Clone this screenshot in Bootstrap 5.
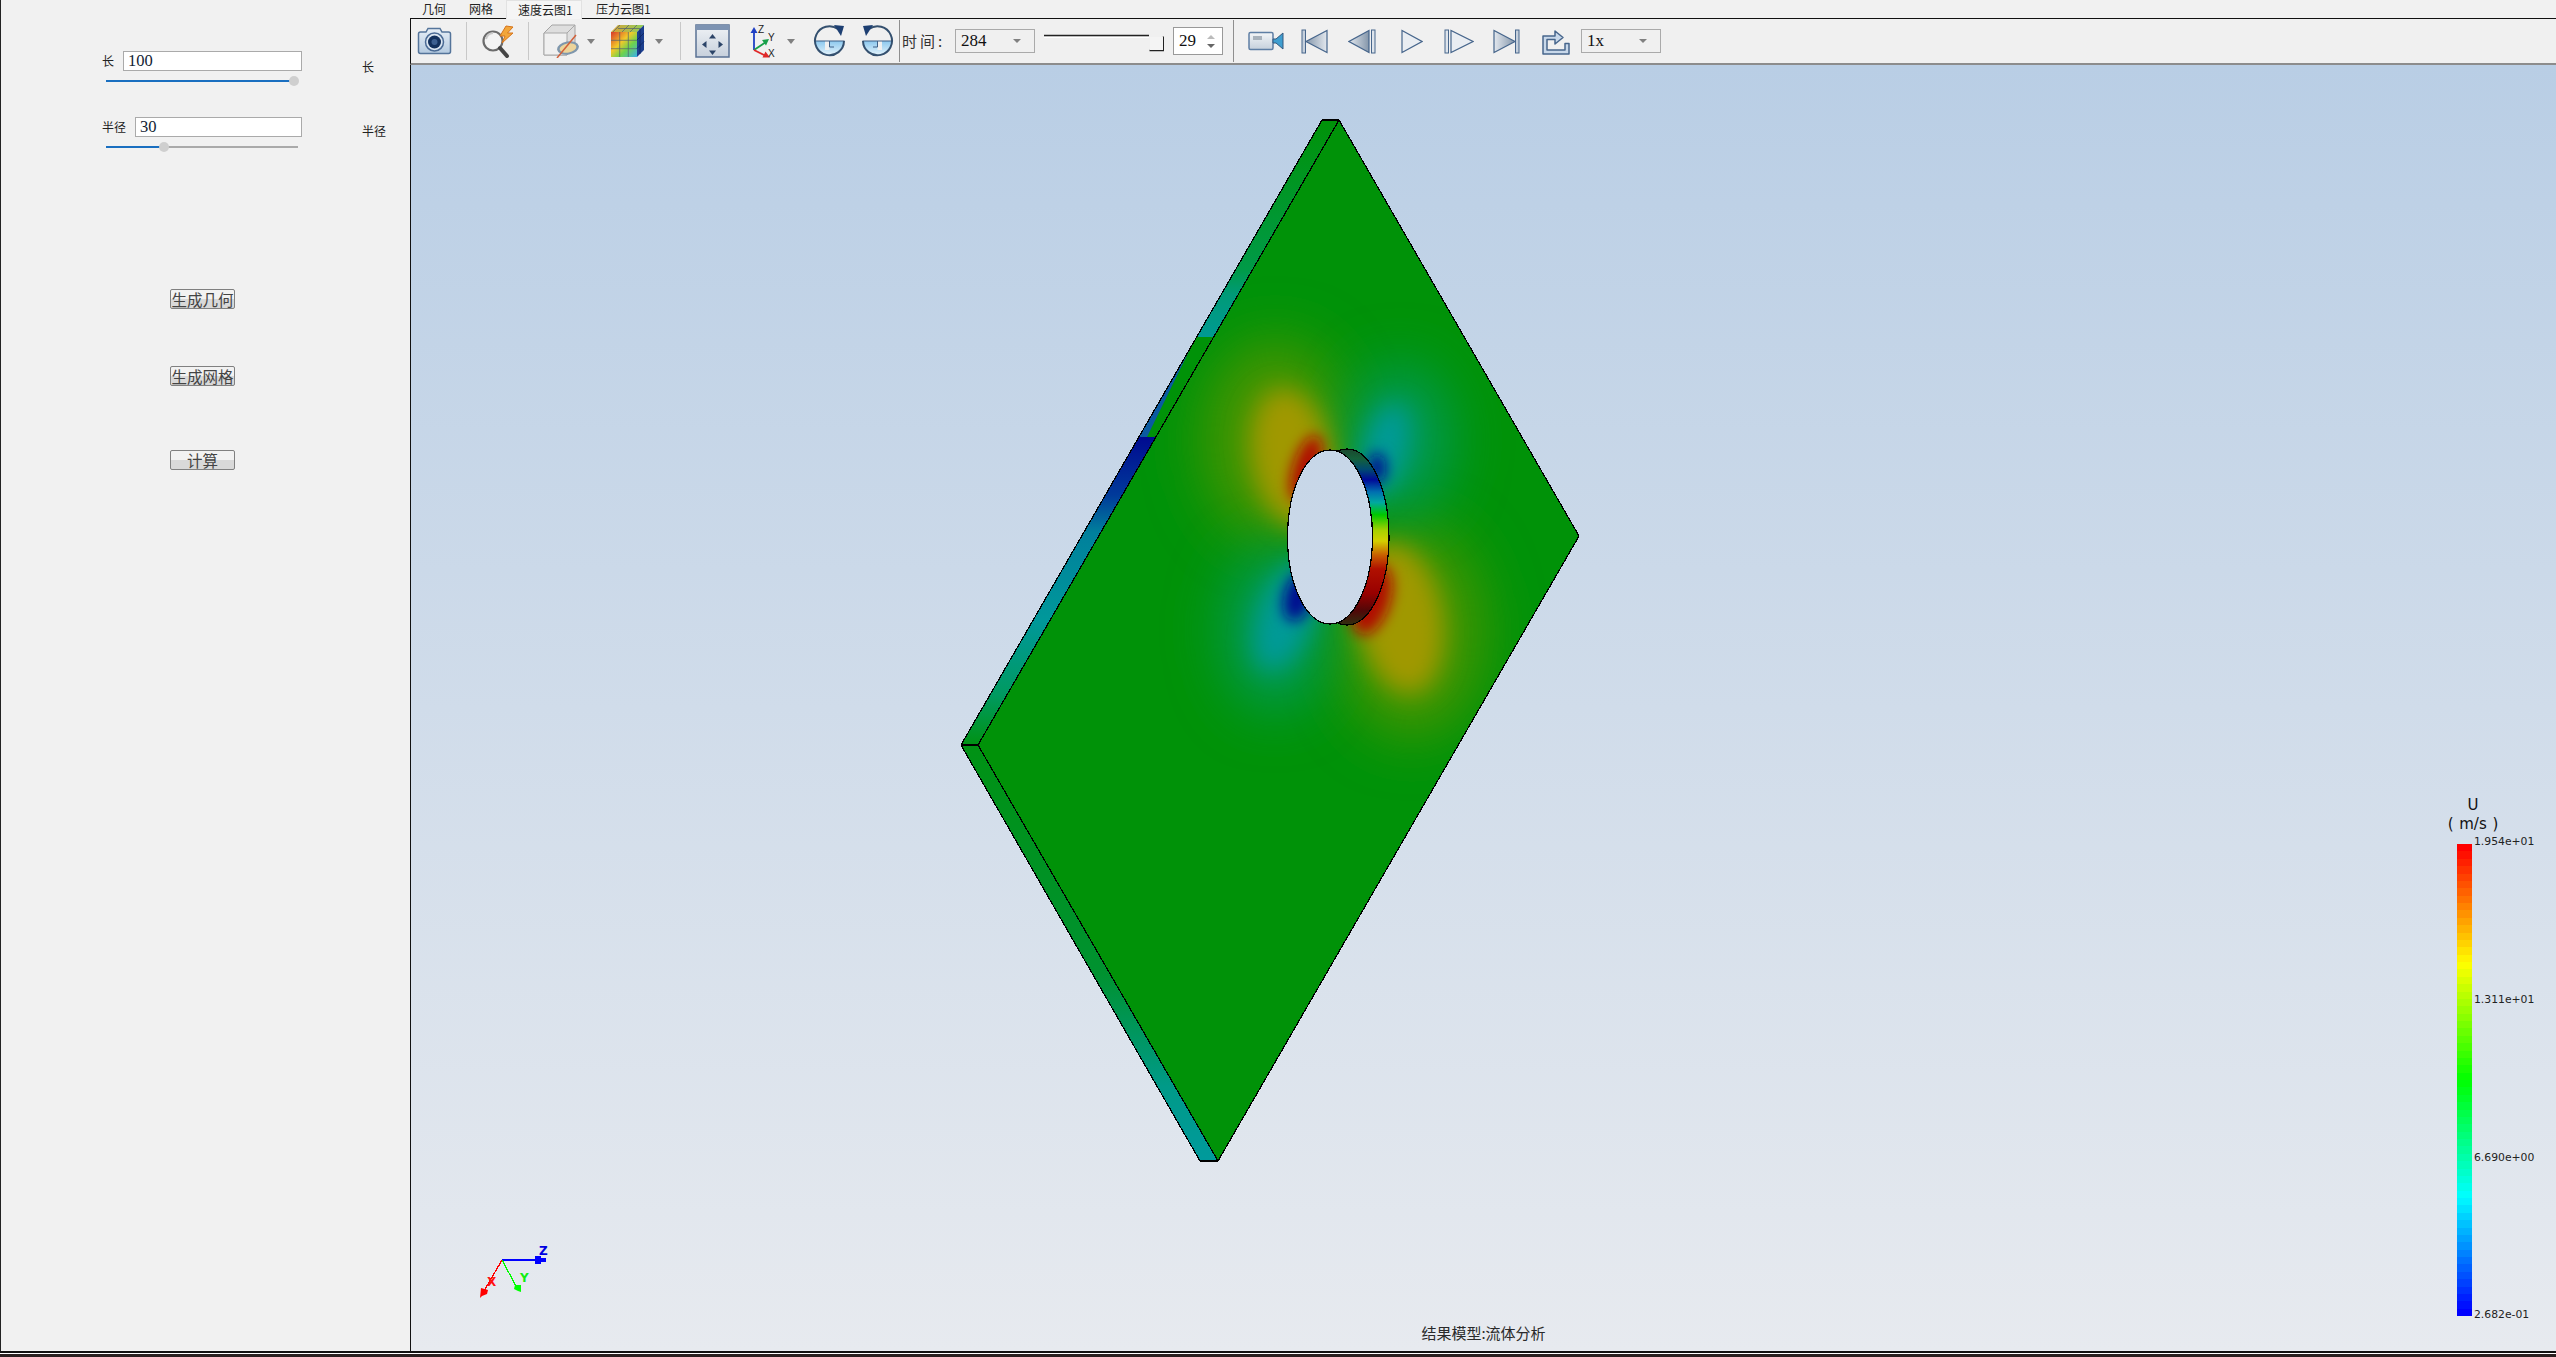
<!DOCTYPE html>
<html lang="zh">
<head>
<meta charset="UTF-8">
<title>流体分析</title>
<link href="https://cdn.jsdelivr.net/npm/bootstrap@5.3.0/dist/css/bootstrap.min.css" rel="stylesheet">
<style>
body { background: #f1f1f1; height: 1357px; overflow: hidden; color: #111; font-family: "Liberation Serif", "Noto Sans CJK SC", serif; font-size: 12px; }
.app-shell { height: 1351px; border-left: 1px solid #222; }
.side-panel { width: 409px; flex: none; }
.cjk { font-family: "Noto Sans CJK SC", sans-serif; }
.param-row { height: 20px; }
.param-row.first { margin-top: 51px; padding-left: 101px; }
.param-row.second { margin-top: 35px; padding-left: 101px; }
.param-label { font-size: 12px; line-height: 20px; color: #222; }
.param-label.short { width: 21px; }
.param-label.long { width: 33px; }
.param-input.form-control { width: 179px; height: 20px; padding: 0 4px; border: 1px solid #aaa; border-radius: 0; font-size: 16.5px; line-height: 18px; font-family: "Liberation Serif", serif; color: #123; }
.param-input.narrow.form-control { width: 167px; }
.side-note { position: absolute; left: 361px; font-size: 12px; line-height: 16px; color: #222; }
.side-note.n1 { top: 59px; }
.side-note.n2 { top: 123px; }
.track { position: relative; width: 192px; height: 2px; margin: 9px 0 0 105px; background: #aaa; }
.track-fill { height: 2px; background: #1a6fc0; }
.track-thumb { position: absolute; top: -4px; width: 10px; height: 10px; margin-left: -5px; border-radius: 50%; background: #cfcfcf; }
.qt-btn.btn { display: block; width: 65px; height: 20px; padding: 0; white-space: nowrap; border: 1px solid #808080; border-radius: 2px; background: linear-gradient(#f2f2f2 0 50%, #d9d9d9 50%); font-size: 15.5px; line-height: 17px; color: #444; margin-left: 169px; text-align: center; }
.b1.btn { margin-top: 141px; }
.b2.btn { margin-top: 57px; }
.b3.btn { margin-top: 64px; }
.main-pane { min-width: 0; }
.tab-strip { height: 18px; padding-left: 12px; font-size: 12px; line-height: 18px; color: #222; white-space: nowrap; }
.tab-item { width: 47px; }
.tab-item.w2 { width: 37px; }
.tab-item.on { width: 76px; height: 19px; margin: 0 14px 0 0; padding-left: 11px; background: #f5f5f5; border: 1px solid #e2e2e2; border-bottom: 0; position: relative; z-index: 2; }
.tab-item.w3 { width: 60px; }
.tool-strip { height: 47px; border-top: 1px solid #111; border-left: 1px solid #111; border-bottom: 2px solid #8c8c8c; background: #f0f0f0; padding-left: 0; }
.tool-strip > * { flex: none; }
.tool-sep { width: 1px; height: 38px; background: #c8c8c8; }
.tool-sep.dark { background: #8f8f8f; height: 42px; }
.drop-tri { width: 0; height: 0; border: 4.5px solid transparent; border-top: 5px solid #808080; border-bottom: 0; }
.time-label { font-size: 15px; letter-spacing: 3px; color: #333; width: 43px; white-space: nowrap; }
.combo-box { height: 24px; border: 1px solid #aaa; width: 80px; padding-left: 5px; font-size: 17px; line-height: 22px; color: #111; position: relative; }
.combo-box::after { content: ""; position: absolute; right: 13px; top: 9px; border: 4px solid transparent; border-top: 4px solid #808080; border-bottom: 0; }
.spin-box { width: 50px; height: 28px; background: #fff; border: 1px solid #999; padding-left: 5px; font-size: 17px; line-height: 26px; position: relative; }
.spin-box::before { content: ""; position: absolute; right: 7px; top: 7px; border: 4px solid transparent; border-bottom: 4px solid #bbb; border-top: 0; }
.spin-box::after { content: ""; position: absolute; right: 7px; top: 16px; border: 4px solid transparent; border-top: 4px solid #666; border-bottom: 0; }
.sp2 { margin-left: 2px; } .sp5 { margin-left: 5px; } .sp6 { margin-left: 6px; } .sp8 { margin-left: 8px; } .sp9 { margin-left: 9px; } .sp10 { margin-left: 10px; } .sp11 { margin-left: 11px; }
.sp12 { margin-left: 12px; } .sp13 { margin-left: 13px; } .sp14 { margin-left: 14px; } .sp15 { margin-left: 15px; } .sp16 { margin-left: 16px; } .sp17 { margin-left: 17px; }
.sp18 { margin-left: 18px; } .sp19 { margin-left: 19px; } .sp20 { margin-left: 20px; } .sp21 { margin-left: 21px; } .sp25 { margin-left: 25px; }
.view-port { position: relative; height: 1286px; border-left: 1px solid #111; background: linear-gradient(#b9cee5, #e7eaef); overflow: hidden; }
.scene { position: absolute; left: 0; top: 0; }
.legend-title { position: absolute; left: 2030px; width: 64px; text-align: center; font-family: "DejaVu Sans", sans-serif; color: #111; line-height: 18px; }
.legend-title.u { top: 731px; font-size: 15px; }
.legend-title.unit { top: 750px; font-size: 15px; word-spacing: 1px; }
.legend-bar { position: absolute; left: 2046px; top: 779px; width: 15px; height: 472px; display: flex; flex-direction: column; }
.legend-bar div { flex: 1; }
.legend-val { position: absolute; left: 2063px; font-family: "DejaVu Sans", sans-serif; font-size: 10.8px; line-height: 14px; color: #222; white-space: nowrap; }
.lv1 { top: 770px; } .lv2 { top: 928px; } .lv3 { top: 1086px; } .lv4 { top: 1243px; }
.model-note { position: absolute; left: 0; right: 0; bottom: 8px; text-align: center; font-size: 15px; line-height: 20px; color: #2a2a2a; font-family: "Noto Sans CJK SC", sans-serif; }
.foot-line { height: 6px; border-top: 2px solid #111; background: linear-gradient(#fff 0 1px, #2a2020 1px); }
</style>
</head>
<body>
<div class="app-shell d-flex">
  <aside class="side-panel position-relative">
    <div class="param-row first d-flex"><span class="param-label short cjk">长</span><input class="param-input form-control" value="100"></div>
    <div class="track"><div class="track-fill" style="width:98%"></div><div class="track-thumb" style="left:98%"></div></div>
    <div class="param-row second d-flex"><span class="param-label long cjk">半径</span><input class="param-input narrow form-control" value="30"></div>
    <div class="track"><div class="track-fill" style="width:30%"></div><div class="track-thumb" style="left:30%"></div></div>
    <span class="side-note n1 cjk">长</span>
    <span class="side-note n2 cjk">半径</span>
    <button class="qt-btn b1 btn cjk">生成几何</button>
    <button class="qt-btn b2 btn cjk">生成网格</button>
    <button class="qt-btn b3 btn cjk">计算</button>
  </aside>
  <main class="main-pane flex-grow-1">
    <div class="tab-strip d-flex cjk">
      <span class="tab-item">几何</span>
      <span class="tab-item w2">网格</span>
      <span class="tab-item on">速度云图1</span>
      <span class="tab-item w3">压力云图1</span>
    </div>
    <div class="tool-strip d-flex align-items-center">
      <!-- snapshot -->
      <svg class="sp6" width="35" height="28" viewBox="0 0 35 28"><defs><linearGradient id="gCam" x1="0" y1="0" x2="0" y2="1"><stop offset="0" stop-color="#e6eef6"/><stop offset="1" stop-color="#b4cae0"/></linearGradient></defs><path d="M1.5 7 Q1.5 5 3.5 5 H9 L11 1.5 H23 L25 5 H31.5 Q33.5 5 33.5 7 V24.500 Q33.500 26.500 31.500 26.500 H3.500 Q1.500 26.500 1.500 24.500 Z" fill="url(#gCam)" stroke="#54749a" stroke-width="1.500"/><circle cx="17.500" cy="15" r="9" fill="#dbe6f1" stroke="#4a6a94" stroke-width="1.500"/><circle cx="17.500" cy="15" r="6.500" fill="#12305c"/><circle cx="17.500" cy="15" r="3" fill="#3c5f90"/></svg>
      <span class="tool-sep sp14"></span>
      <!-- zoom -->
      <svg class="sp12" width="36" height="33" viewBox="0 0 36 33"><circle cx="14" cy="16" r="9.500" fill="#f4f4f4" stroke="#6c6c6c" stroke-width="2.200"/><path d="M14 8 A8 8 0 0 0 7 14" fill="none" stroke="#c9c9c9" stroke-width="2"/><path d="M21 23 L28 31" stroke="#454545" stroke-width="4" stroke-linecap="round"/><path d="M27 1 L21 11 H26 L23 18 L34 8 H28.500 L34 2 Z" fill="#f2a63a" stroke="#d5741c" stroke-width="1"/></svg>
      <span class="tool-sep sp13"></span>
      <!-- section box -->
      <svg class="sp14" width="36" height="34" viewBox="0 0 36 34"><path d="M1 9 L9 1 H32 V22 L24 31 H1 Z" fill="#dedede" stroke="#a4a4a4"/><path d="M1 9 H24 V31 H1 Z" fill="#f0f0f0" stroke="#a8a8a8"/><path d="M24 9 L32 1" fill="none" stroke="#a8a8a8"/><ellipse cx="25" cy="24" rx="11" ry="6.500" fill="#7f97ad" transform="rotate(-10 25 24)"/><ellipse cx="25" cy="24" rx="8.500" ry="4.500" fill="#ecd49a" transform="rotate(-10 25 24)"/><path d="M14 34 L33 11" stroke="#d2603a" stroke-width="1.500"/></svg>
      <span class="drop-tri sp8"></span>
      <!-- color cube -->
      <svg class="sp16" width="34" height="34" viewBox="0 0 34 34"><defs><linearGradient id="gCube" x1="0" y1="0" x2="1" y2="1"><stop offset="0" stop-color="#d8382a"/><stop offset=".4" stop-color="#f2c92a"/><stop offset=".65" stop-color="#6ed24c"/><stop offset="1" stop-color="#38b0ea"/></linearGradient><linearGradient id="gTop" x1="0" y1="0" x2="1" y2="0"><stop offset="0" stop-color="#d8a238"/><stop offset="1" stop-color="#8fd05a"/></linearGradient></defs><path d="M0 8 L7 1 H33 L26 8 Z" fill="url(#gTop)"/><path d="M26 8 L33 1 V26 L26 33 Z" fill="#1c3f8e"/><rect x="0" y="8" width="26" height="25" fill="url(#gCube)"/><path d="M8.700 8 V33 M17.300 8 V33 M0 16.300 H26 M0 24.700 H26 M7 4.500 H30 M9 1 L2 8 M18 1 L11 8 M26 1 L19 8" stroke="#50606e" stroke-width=".7" fill="none"/><path d="M29 5 V30 M26 16 L33 9 M26 24.500 L33 17.500" stroke="#0e2560" stroke-width=".8" fill="none"/></svg>
      <span class="drop-tri sp10"></span>
      <span class="tool-sep sp17"></span>
      <!-- fit view -->
      <svg class="sp14" width="35" height="34" viewBox="0 0 35 34"><defs><linearGradient id="gFit" x1="0" y1="0" x2="0" y2="1"><stop offset="0" stop-color="#f0f3f6"/><stop offset="1" stop-color="#c7d0dc"/></linearGradient></defs><rect x="1" y="1" width="33" height="32" fill="url(#gFit)" stroke="#5a7194" stroke-width="1.500"/><rect x="1" y="1" width="33" height="5" fill="#7d93b2"/><g fill="#2c4468"><path d="M17.500 10 L14 14.500 H21 Z"/><path d="M17.500 31 L14 26.500 H21 Z"/><path d="M7 20.500 L11.500 17 V24 Z"/><path d="M28 20.500 L23.500 17 V24 Z"/></g></svg>
      <!-- axis -->
      <svg class="sp18" width="29" height="34" viewBox="0 0 29 34"><path d="M6 26 V8" stroke="#1f3fc4" stroke-width="1.800"/><path d="M6 3 L2.500 9 H9.500 Z" fill="#1f3fc4"/><path d="M6 26 L18 18" stroke="#18a04a" stroke-width="1.800"/><path d="M21 15 L14 16 L18 21.500 Z" fill="#18a04a"/><path d="M6 26 L18 32" stroke="#e02828" stroke-width="1.800"/><path d="M22 33.500 L14.500 33.500 L17.500 27.500 Z" fill="#e02828"/><text x="10" y="9" font-family="Liberation Sans, sans-serif" font-size="10" fill="#222">Z</text><text x="20" y="17" font-family="Liberation Sans, sans-serif" font-size="10" fill="#222">Y</text><text x="20" y="33" font-family="Liberation Sans, sans-serif" font-size="10" fill="#222">X</text></svg>
      <span class="drop-tri sp10"></span>
      <!-- rotate cw -->
      <svg class="sp18" width="33" height="32" viewBox="0 0 33 32"><defs><linearGradient id="gPie" x1="0" y1="0" x2="0" y2="1"><stop offset="0" stop-color="#8cc8ee"/><stop offset="1" stop-color="#e6f4fc"/></linearGradient></defs><path d="M2 16 A14.500 14.500 0 0 0 31 16 H16.500 V25 H12 V16 Z" fill="url(#gPie)"/><path d="M1.500 16 H31.500 M16.500 16 V22 H21" fill="none" stroke="#3f5f86" stroke-width="1"/><path d="M25 4 A14.500 14.500 0 1 0 31 16" fill="none" stroke="#34506f" stroke-width="2"/><path d="M21 0 L31 1 L28 11 Z" fill="#1d3f72"/></svg>
      <!-- rotate ccw -->
      <svg class="sp15" width="33" height="32" viewBox="0 0 33 32"><path d="M31 16 A14.500 14.500 0 0 1 2 16 H16.500 V25 H21 V16 Z" fill="url(#gPie)"/><path d="M1.500 16 H31.500 M16.500 16 V22 H12" fill="none" stroke="#3f5f86" stroke-width="1"/><path d="M8 4 A14.500 14.500 0 1 1 2 16" fill="none" stroke="#34506f" stroke-width="2"/><path d="M12 0 L2 1 L5 11 Z" fill="#1d3f72"/></svg>
      <span class="tool-sep dark sp5"></span>
      <span class="time-label sp2 cjk">时间:</span>
      <div class="combo-box sp10">284</div>
      <!-- time slider -->
      <svg class="sp9" width="120" height="26" viewBox="0 -5 120 26"><path d="M0 2.500 H105" stroke="#222" stroke-width="1.500"/><path d="M0 4.500 H105" stroke="#fff"/><path d="M105.500 17.500 H119.500 V3.500" fill="none" stroke="#222" stroke-width="1.500"/><rect x="106" y="4" width="13" height="13" fill="#f4f4f4"/></svg>
      <div class="spin-box sp9">29</div>
      <span class="tool-sep dark sp10"></span>
      <!-- record -->
      <svg class="sp14" width="36" height="20" viewBox="0 0 36 20"><defs><linearGradient id="gRec" x1="0" y1="0" x2="0" y2="1"><stop offset="0" stop-color="#f4f6f8"/><stop offset="1" stop-color="#c5d0dc"/></linearGradient></defs><rect x="1" y="1.500" width="24" height="17" rx="1.500" fill="url(#gRec)" stroke="#5e7ea4" stroke-width="1.500"/><rect x="5" y="5" width="9" height="4" fill="#a8b2bc"/><path d="M25 8 L28 8 L35 2 V18 L28 12 H25 Z" fill="#3f9ed0" stroke="#35597f"/></svg>
      <!-- playback -->
      <svg class="sp17" width="27" height="25" viewBox="0 0 27 25"><defs><linearGradient id="gTri" x1="0" y1="0" x2="1" y2="0"><stop offset="0" stop-color="#8496aa"/><stop offset="1" stop-color="#e3e8ee"/></linearGradient><linearGradient id="gTriR" x1="0" y1="0" x2="1" y2="0"><stop offset="0" stop-color="#e3e8ee"/><stop offset="1" stop-color="#8496aa"/></linearGradient></defs><rect x="1" y="1" width="3.500" height="23" fill="#c6d0dc" stroke="#47668c"/><path d="M26 1.500 V23.500 L5 12.500 Z" fill="url(#gTri)" stroke="#47668c" stroke-width="1.200"/></svg>
      <svg class="sp20" width="28" height="25" viewBox="0 0 28 25"><path d="M21 1.500 V23.500 L1 12.500 Z" fill="url(#gTriR)" stroke="#47668c" stroke-width="1.200"/><rect x="23.500" y="1" width="3.500" height="23" fill="#dfe5ec" stroke="#47668c"/></svg>
      <svg class="sp25" width="22" height="25" viewBox="0 0 22 25"><path d="M1 1.500 V23.500 L21 12.500 Z" fill="#e9edf2" stroke="#47668c" stroke-width="1.200"/></svg>
      <svg class="sp21" width="30" height="25" viewBox="0 0 30 25"><rect x="1" y="1" width="3.500" height="23" fill="#dfe5ec" stroke="#47668c"/><path d="M7 1.500 V23.500 L29 12.500 Z" fill="#e9edf2" stroke="#47668c" stroke-width="1.200"/></svg>
      <svg class="sp19" width="27" height="25" viewBox="0 0 27 25"><path d="M1 1.500 V23.500 L22 12.500 Z" fill="url(#gTriR)" stroke="#47668c" stroke-width="1.200"/><rect x="22.500" y="1" width="3.500" height="23" fill="#c6d0dc" stroke="#47668c"/></svg>
      <!-- export -->
      <svg class="sp21" width="29" height="27" viewBox="0 0 29 27"><path d="M2 8 H14 V3 L22 9.500 L14 16 V11.500 H6 V22 H24 V15.500 H28 V26 H2 Z" fill="#c8d8ea" stroke="#47668c" stroke-width="1.500" stroke-linejoin="round"/></svg>
      <div class="combo-box sp11">1x</div>
    </div>
    <div class="view-port">
      <svg class="scene" width="2145" height="1286" viewBox="411 65 2145 1286">
        <defs>
          <linearGradient id="skyFill" gradientUnits="userSpaceOnUse" x1="0" y1="65" x2="0" y2="1351"><stop offset="0" stop-color="#b9cee5"/><stop offset="1" stop-color="#e7eaef"/></linearGradient>
          <linearGradient id="edgeTop" gradientUnits="userSpaceOnUse" x1="0" y1="120" x2="0" y2="745">
            <stop offset="0" stop-color="#009208"/><stop offset=".24" stop-color="#009a48"/><stop offset=".28" stop-color="#009a78"/><stop offset=".347" stop-color="#009a92"/>
            <stop offset=".347" stop-color="#009208"/><stop offset=".507" stop-color="#009208"/><stop offset=".507" stop-color="#000a90"/>
            <stop offset=".6" stop-color="#003a9a"/><stop offset=".66" stop-color="#00809c"/><stop offset=".8" stop-color="#00989a"/><stop offset=".92" stop-color="#009a60"/><stop offset="1" stop-color="#009214"/>
          </linearGradient>
          <linearGradient id="edgeLow" gradientUnits="userSpaceOnUse" x1="0" y1="745" x2="0" y2="1161">
            <stop offset="0" stop-color="#009214"/><stop offset=".55" stop-color="#009230"/><stop offset=".82" stop-color="#009a88"/><stop offset="1" stop-color="#009a9c"/>
          </linearGradient>
          <linearGradient id="wallFill" gradientUnits="userSpaceOnUse" x1="0" y1="450" x2="0" y2="625">
            <stop offset="0" stop-color="#1a4a30"/><stop offset=".05" stop-color="#14603a"/><stop offset=".11" stop-color="#004a70"/><stop offset=".17" stop-color="#000a98"/><stop offset=".24" stop-color="#0070b0"/><stop offset=".3" stop-color="#00a8a0"/><stop offset=".37" stop-color="#00c800"/><stop offset=".46" stop-color="#a8d000"/><stop offset=".52" stop-color="#d4d000"/><stop offset=".6" stop-color="#c86000"/><stop offset=".68" stop-color="#b01000"/><stop offset=".82" stop-color="#980000"/><stop offset=".92" stop-color="#500808"/><stop offset="1" stop-color="#303010"/>
          </linearGradient>
          <clipPath id="faceClip"><polygon points="1339,120 1579,536 1218,1161 978,745"/></clipPath>
          <filter id="blurWide" x="-100%" y="-100%" width="300%" height="300%"><feGaussianBlur stdDeviation="28"/></filter>
          <filter id="blurMid" x="-100%" y="-100%" width="300%" height="300%"><feGaussianBlur stdDeviation="12"/></filter>
          <filter id="blurTight" x="-100%" y="-100%" width="300%" height="300%"><feGaussianBlur stdDeviation="7"/></filter>
        </defs>
        <!-- plate edges -->
        <polygon points="1322,120 1339,120 978,745 961,745" fill="url(#edgeTop)"/>
        <polygon points="1193,343 1139,437 1147,437" fill="#0a5aa0"/>
        <polygon points="961,745 978,745 1218,1161 1200,1161" fill="url(#edgeLow)"/>
        <!-- plate face -->
        <polygon points="1339,120 1579,536 1218,1161 978,745" fill="#009208"/>
        <g clip-path="url(#faceClip)">
          <ellipse cx="1275" cy="440" rx="72" ry="100" fill="#4a9400" filter="url(#blurWide)"/>
          <ellipse cx="1412" cy="632" rx="72" ry="105" fill="#4a9400" filter="url(#blurWide)"/>
          <ellipse cx="1400" cy="440" rx="50" ry="75" fill="#009a58" filter="url(#blurWide)"/>
          <ellipse cx="1275" cy="630" rx="50" ry="80" fill="#009a58" filter="url(#blurWide)"/>
          <ellipse cx="1292" cy="458" rx="40" ry="70" fill="#a09800" filter="url(#blurMid)" transform="rotate(-10 1292 458)"/>
          <ellipse cx="1400" cy="618" rx="42" ry="76" fill="#a09800" filter="url(#blurMid)" transform="rotate(-10 1400 618)"/>
          <ellipse cx="1385" cy="450" rx="22" ry="48" fill="#009a98" filter="url(#blurMid)" transform="rotate(15 1385 450)"/>
          <ellipse cx="1286" cy="615" rx="27" ry="58" fill="#009a98" filter="url(#blurMid)" transform="rotate(20 1286 615)"/>
          <ellipse cx="1306" cy="468" rx="13" ry="34" fill="#b01000" filter="url(#blurTight)" transform="rotate(18 1306 468)"/>
          <ellipse cx="1372" cy="600" rx="18" ry="36" fill="#b01000" filter="url(#blurTight)" transform="rotate(18 1372 600)"/>
          <ellipse cx="1377" cy="468" rx="9" ry="15" fill="#000a90" filter="url(#blurTight)"/>
          <ellipse cx="1298" cy="597" rx="14" ry="25" fill="#000a90" filter="url(#blurTight)" transform="rotate(15 1298 597)"/>
        </g>
        <!-- outlines -->
        <g fill="none" stroke="#000" stroke-width="1.200" shape-rendering="crispEdges">
          <polygon points="1322,120 1339,120 1579,536 1218,1161 1200,1161 961,745"/>
          <path d="M1339 120 L978 745 L1218 1161 M961 745 H978"/>
        </g>
        <!-- hole -->
        <ellipse cx="1347" cy="537" rx="42" ry="88" fill="url(#wallFill)" stroke="#000" stroke-width="1.200" shape-rendering="crispEdges"/>
        <ellipse cx="1330" cy="537" rx="42.500" ry="87" fill="url(#skyFill)" stroke="#000" stroke-width="1.200" shape-rendering="crispEdges"/>
        <!-- triad -->
        <g fill="none" stroke-width="1.300" shape-rendering="crispEdges">
          <path d="M502 1260 H536" stroke="#0000ff"/><path d="M502 1260 L484 1291" stroke="#ff0000"/><path d="M502 1260 L516 1286" stroke="#00ff00"/>
        </g>
        <path d="M535 1256 H541 V1258 H546 V1262 H541 V1264 H535 Z" fill="#0000ff"/>
        <path d="M481 1288 L488 1290 L487 1294 L482 1296 L480 1298 Z" fill="#ff0000"/>
        <path d="M515 1285 L521 1285 L521 1292 L518 1291 L514 1289 Z" fill="#00ff00"/>
        <g font-family="DejaVu Sans, sans-serif" font-weight="700" font-size="12">
          <text x="539" y="1255" fill="#0000e0">Z</text><text x="487" y="1286" fill="#ff1010">X</text><text x="520" y="1282" fill="#10ee10">Y</text>
        </g>
      </svg>
      <div class="legend-title u">U</div>
      <div class="legend-title unit">( m/s )</div>
      <div class="legend-bar" id="colorBar"></div>
      <span class="legend-val lv1">1.954e+01</span>
      <span class="legend-val lv2">1.311e+01</span>
      <span class="legend-val lv3">6.690e+00</span>
      <span class="legend-val lv4">2.682e-01</span>
      <div class="model-note">结果模型:流体分析</div>
    </div>
  </main>
</div>
<div class="foot-line"></div>
<script src="https://cdn.jsdelivr.net/npm/bootstrap@5.3.0/dist/js/bootstrap.bundle.min.js"></script>
<script>
// rainbow colour map, 64 steps, red on top
var bar = document.getElementById('colorBar');
var n = 64;
for (var i = 0; i < n; i++) {
  var t = i / (n - 1), r, g, b;
  if (t < .25) { r = 255; g = t / .25 * 255; b = 0; }
  else if (t < .5) { r = (1 - (t - .25) / .25) * 255; g = 255; b = 0; }
  else if (t < .75) { r = 0; g = 255; b = (t - .5) / .25 * 255; }
  else { r = 0; g = (1 - (t - .75) / .25) * 255; b = 255; }
  var d = document.createElement('div');
  d.style.background = 'rgb(' + Math.round(r) + ',' + Math.round(g) + ',' + Math.round(b) + ')';
  bar.appendChild(d);
}
</script>
</body>
</html>
